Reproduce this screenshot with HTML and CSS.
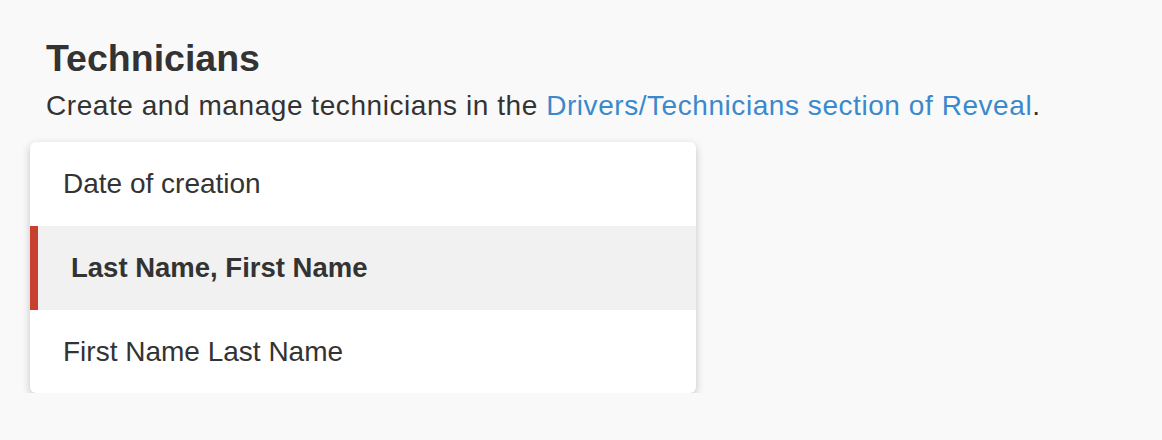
FILE: index.html
```html
<!DOCTYPE html>
<html>
<head>
<meta charset="utf-8">
<link rel="stylesheet" href="styles.css">
</head>
<body>
<div class="page">
  <h1 class="title">Technicians</h1>
  <p class="subtitle">Create and manage technicians in the <a class="link" href="#">Drivers/Technicians section of Reveal</a>.</p>
  <ul class="menu">
    <li class="menu-item">Date of creation</li>
    <li class="menu-item is-selected">Last Name, First Name</li>
    <li class="menu-item is-last">First Name Last Name</li>
  </ul>
</div>
</body>
</html>
```

FILE: styles.css
```css
html, body {
  margin: 0;
  padding: 0;
  background: #f9f9f9;
}
body {
  font-family: "Liberation Sans", Arial, sans-serif;
  color: #333333;
}
.page {
  padding: 36px 0 0 30px;
}
.title {
  margin: 0 0 8px 16px;
  font-size: 37.5px;
  line-height: 44px;
  font-weight: bold;
  color: #333333;
}
.subtitle {
  margin: 0 0 18px 16px;
  font-size: 28px;
  line-height: 36px;
  letter-spacing: 0.56px;
}
.link {
  color: #3a89cc;
  text-decoration: none;
}
.menu {
  list-style: none;
  margin: 0;
  padding: 0;
  width: 666px;
  background: #ffffff;
  border-radius: 6px;
  box-shadow: 0 3px 8px rgba(0, 0, 0, 0.22);
  overflow: hidden;
}
.menu-item {
  display: flex;
  align-items: center;
  height: 84px;
  padding-left: 33px;
  font-size: 28px;
  box-sizing: border-box;
}
.menu-item.is-last {
  height: 83px;
}
.menu-item.is-selected {
  background: #f1f1f1;
  border-left: 8px solid #c8402f;
  font-weight: bold;
  font-size: 27.5px;
}
```
